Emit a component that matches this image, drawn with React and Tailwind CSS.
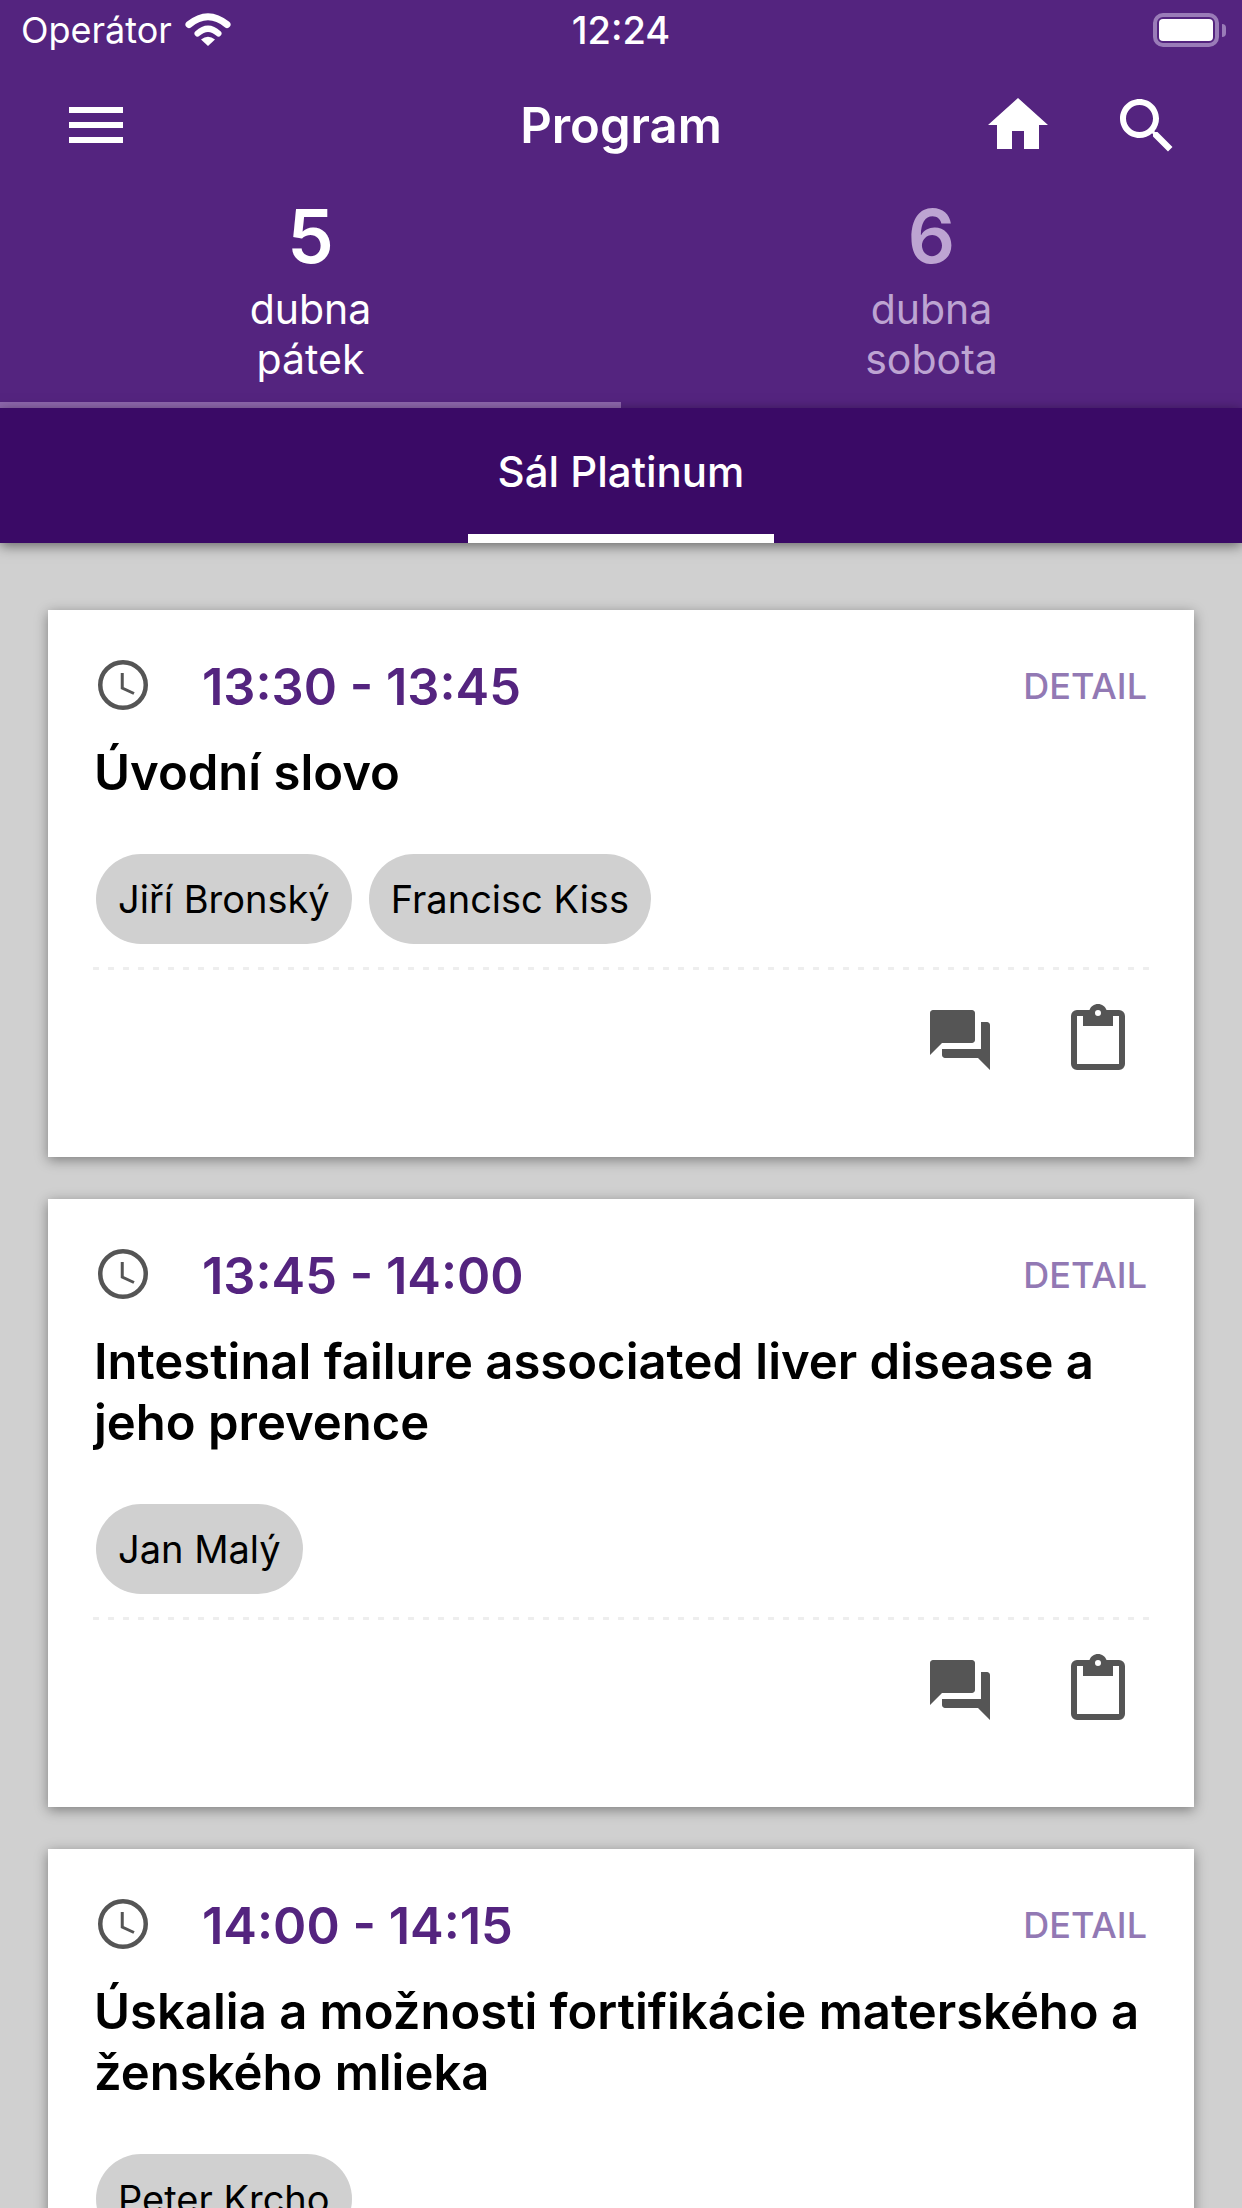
import React from "react";

const sessions = [
  { time: "13:30 - 13:45", title: ["Úvodní slovo"], people: ["Jiří Bronský", "Francisc Kiss"] },
  { time: "13:45 - 14:00", title: ["Intestinal failure associated liver disease a", "jeho prevence"], people: ["Jan Malý"] },
  { time: "14:00 - 14:15", title: ["Úskalia a možnosti fortifikácie materského a", "ženského mlieka"], people: ["Peter Krcho"] },
];

function Wifi() {
  return (
    <svg viewBox="0 0 46 34" className="w-[46px] h-[34px]" fill="none" stroke="white" strokeLinecap="round">
      <path d="M4 11.500Q23 -4 42 11.500" strokeWidth="7" />
      <path d="M12.500 20.500Q23 11 33.500 20.500" strokeWidth="6" />
      <path d="M23 33L16 26.500Q23 21 30 26.500Z" fill="white" stroke="none" />
    </svg>
  );
}

function Battery() {
  return (
    <div className="flex items-center">
      <div className="w-[66px] h-[34px] rounded-[10px] border-[4px] border-[#9a7cb8] p-[2px]">
        <div className="w-full h-full rounded-[4px] bg-white" />
      </div>
      <div className="w-[4px] h-[13px] ml-[3px] rounded-r-full bg-[#9a7cb8]" />
    </div>
  );
}

function ClockIcon() {
  return (
    <svg viewBox="0 0 24 24" className="w-[60px] h-[60px]" fill="none" stroke="#555555">
      <circle cx="12" cy="12" r="9.100" strokeWidth="1.800" />
      <path d="M11.700 7.200V13.200L16.400 15.400" strokeWidth="1.200" />
    </svg>
  );
}

function ForumIcon() {
  return (
    <svg viewBox="0 0 24 24" className="w-[72px] h-[72px] fill-[#555555]">
      <path d="M21 6h-2v9H6v2c0 .55.45 1 1 1h11l4 4V7c0-.55-.45-1-1-1zm-4 6V3c0-.55-.45-1-1-1H3c-.55 0-1 .45-1 1v14l4-4h10c.55 0 1-.45 1-1z" />
    </svg>
  );
}

function ClipboardIcon() {
  return (
    <svg viewBox="0 0 54 66" className="w-[54px] h-[66px] fill-[#555555]">
      <path
        fillRule="evenodd"
        d="M6 6h12.500C19.800 2.500 23 0 27 0s7.200 2.500 8.500 6H48a6 6 0 0 1 6 6v48a6 6 0 0 1-6 6H6a6 6 0 0 1-6-6V12a6 6 0 0 1 6-6zM6 12v48h42V12h-6v10H12V12zM27 6a3 3 0 1 0 0 6 3 3 0 0 0 0-6z"
      />
    </svg>
  );
}

function SessionCard({ session }) {
  return (
    <div className="bg-white pt-[50px] pb-[81px] pl-[46px] pr-[45px] shadow-[0_3px_12px_rgba(0,0,0,0.4)]">
      <div className="flex items-center h-[50px]">
        <div className="w-[60px] -ml-[1px]">
          <ClockIcon />
        </div>
        <div className="ml-[49px] mt-[3px] text-[50.500px] font-semibold text-[#54247f]">{session.time}</div>
        <div className="ml-auto mr-[2px] mt-[1px] text-[36px] font-medium text-[#9279b4]">DETAIL</div>
      </div>
      <div className="mt-[32px] text-[49px] leading-[61px] font-semibold text-black">
        {session.title.map((line) => (
          <div key={line}>{line}</div>
        ))}
      </div>
      <div className="flex gap-[17px] mt-[51px] ml-[2px]">
        {session.people.map((name) => (
          <div key={name} className="h-[90px] px-[22px] flex items-center rounded-[45px] bg-[#d0d0d0] text-[38px] text-black">
            {name}
          </div>
        ))}
      </div>
      <div className="mt-[23px] -ml-px h-[3px] bg-[repeating-linear-gradient(90deg,#eeeeee_0,#eeeeee_6px,transparent_6px,transparent_15px)]" />
      <div className="flex justify-end items-start gap-[75px] mt-[34px] pr-[24px] h-[72px]">
        <ForumIcon />
        <ClipboardIcon />
      </div>
    </div>
  );
}

export default function App() {
  return (
    <div className="relative h-[2208px] overflow-hidden bg-[#d0d0d0] font-['Inter','Liberation_Sans',sans-serif]">
      <header className="bg-[#54247f] text-white">
        <div className="relative flex items-center h-[60px] pl-[21px] pr-[16px]">
          <span className="text-[36px]">Operátor</span>
          <span className="ml-[13px]">
            <Wifi />
          </span>
          <span className="absolute left-0 right-0 text-center text-[38px] font-medium">12:24</span>
          <span className="ml-auto">
            <Battery />
          </span>
        </div>
        <div className="relative flex items-center h-[72px] mt-[30px] pl-[69px] pr-[59px]">
          <div className="flex flex-col gap-[9px] w-[54px] -mt-[2px]">
            <div className="h-[6px] bg-white" />
            <div className="h-[6px] bg-white" />
            <div className="h-[6px] bg-white" />
          </div>
          <div className="absolute left-0 right-0 text-center text-[49px] font-semibold">Program</div>
          <svg viewBox="0 0 24 24" className="ml-auto -mt-[2px] w-[72px] h-[72px] fill-white">
            <path d="M10 20v-6h4v6h5v-8h3L12 3 2 12h3v8z" />
          </svg>
          <svg viewBox="0 0 24 24" className="ml-[57px] w-[72px] h-[72px] fill-white">
            <path d="M15.500 14h-.79l-.28-.27C15.410 12.590 16 11.110 16 9.500 16 5.910 13.090 3 9.500 3S3 5.910 3 9.500 5.910 16 9.500 16c1.610 0 3.090-.59 4.230-1.570l.27.28v.79l5 4.990L20.490 19l-4.990-5zm-6 0C7.010 14 5 11.990 5 9.500S7.010 5 9.500 5 14 7.010 14 9.500 11.990 14 9.500 14z" />
          </svg>
        </div>
        <div className="flex h-[246px]">
          <div className="w-1/2 pt-[32px] border-b-[6px] border-[#8f68ae] text-center">
            <div className="text-[74px] leading-[84px] font-semibold mb-[6px]">5</div>
            <div className="text-[41px] leading-[50px]">dubna</div>
            <div className="text-[41px] leading-[50px]">pátek</div>
          </div>
          <div className="w-1/2 pt-[32px] text-center text-[#bda4d2]">
            <div className="text-[74px] leading-[84px] font-semibold mb-[6px]">6</div>
            <div className="text-[41px] leading-[50px]">dubna</div>
            <div className="text-[41px] leading-[50px]">sobota</div>
          </div>
        </div>
      </header>
      <div className="relative h-[135px] bg-[#3a0a66] shadow-[0_3px_12px_rgba(0,0,0,0.5)] flex justify-center">
        <div className="w-[306px] h-full border-b-[9px] border-white flex items-center justify-center text-white text-[42px] font-medium whitespace-nowrap">
          Sál Platinum
        </div>
      </div>
      <main className="flex flex-col gap-[42px] pt-[67px] px-[48px]">
        {sessions.map((session) => (
          <SessionCard key={session.time} session={session} />
        ))}
      </main>
    </div>
  );
}
